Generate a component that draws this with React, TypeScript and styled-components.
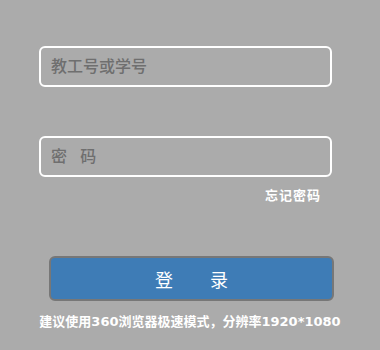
import React from "react";
import styled, { createGlobalStyle } from "styled-components";

const GlobalStyle = createGlobalStyle`
  html, body {
    margin: 0;
    padding: 0;
    background: #ababab;
  }
  body {
    font-family: "Liberation Sans", "Noto Sans CJK SC", sans-serif;
  }
  * { box-sizing: border-box; }
`;

const Page = styled.div`
  width: 380px;
  height: 350px;
  background: #ababab;
  padding-top: 46px;
  display: flex;
  flex-direction: column;
`;

const Form = styled.form`
  margin-left: 39px;
  width: 293px;
  display: flex;
  flex-direction: column;
`;

const Field = styled.input<{ $gap?: number }>`
  display: block;
  width: 293px;
  height: 41px;
  margin: ${(p) => p.$gap ?? 0}px 0 0 0;
  padding: 0 10px;
  border: 2px solid #ffffff;
  border-radius: 6px;
  background: transparent;
  outline: none;
  font-family: "Liberation Sans", "Noto Sans CJK SC", sans-serif;
  font-size: 16px;
  font-weight: 500;
  color: #555;
  &::placeholder {
    color: #6f6f6f;
    opacity: 1;
  }
`;

const ForgotRow = styled.div`
  display: flex;
  justify-content: flex-end;
  padding-right: 11px;
  margin-top: 9px;
`;

const ForgotLink = styled.a`
  font-family: "Liberation Sans", "Noto Sans CJK SC", sans-serif;
  font-size: 13px;
  font-weight: bold;
  letter-spacing: 1px;
  color: #ffffff;
  text-decoration: none;
  line-height: 19px;
`;

const LoginButton = styled.button`
  margin: 51px 0 0 10px;
  width: 285px;
  height: 45px;
  background: #3e7cb6;
  border: 2px solid #777777;
  border-radius: 6px;
  color: #ffffff;
  font-family: "Liberation Sans", "Noto Sans CJK SC", sans-serif;
  font-size: 18px;
  word-spacing: 32px;
  cursor: pointer;
  padding: 0;
`;

const Footer = styled.p`
  margin: 13px 0 0 0;
  text-align: center;
  font-family: "DejaVu Sans", "Noto Sans CJK SC", sans-serif;
  font-size: 13px;
  font-weight: bold;
  color: #ffffff;
  line-height: 16px;
`;

export default function App() {
  return (
    <>
      <GlobalStyle />
      <Page>
        <Form onSubmit={(e) => e.preventDefault()}>
          <Field type="text" placeholder="教工号或学号" />
          <Field type="password" placeholder="密   码" $gap={49} />
          <ForgotRow>
            <ForgotLink href="#">忘记密码</ForgotLink>
          </ForgotRow>
          <LoginButton type="submit">登 录</LoginButton>
        </Form>
        <Footer>建议使用360浏览器极速模式，分辨率1920*1080</Footer>
      </Page>
    </>
  );
}
